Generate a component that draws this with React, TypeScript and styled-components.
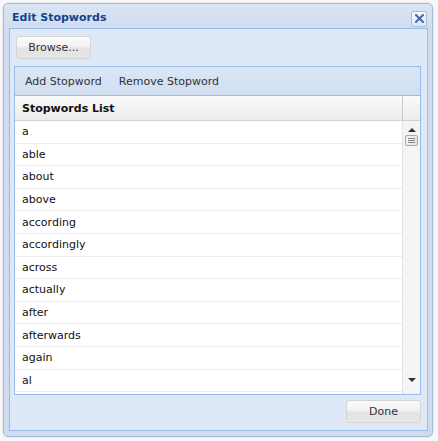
import React from 'react'
import styled, { createGlobalStyle } from 'styled-components'

const GlobalStyle = createGlobalStyle`
	html, body {
		margin: 0;
		padding: 0;
		background: #f7f7f7;
		font-family: "DejaVu Sans", Tahoma, Verdana, sans-serif;
		font-size: 11px;
	}
`

const words = ['a', 'able', 'about', 'above', 'according', 'accordingly', 'across', 'actually', 'after', 'afterwards', 'again', 'al']

const Page = styled.div`
	width: 438px;
	height: 441px;
	padding: 3px 0 0 3px;
	box-sizing: border-box;
`

const Window = styled.div`
	width: 430px;
	height: 434px;
	box-sizing: border-box;
	border: 1px solid #a3bad9;
	border-radius: 5px;
	background: linear-gradient(#d9e5f4, #cfdcef 30px, #cfdcef);
	display: flex;
	flex-direction: column;
	padding: 0 4px 5px 5px;
	box-shadow: 0 0 2px rgba(0, 0, 0, 0.15);
`

const Header = styled.div`
	height: 24px;
	flex-shrink: 0;
	display: flex;
	align-items: center;
	justify-content: space-between;
	padding: 2px 0 0 3px;
	box-sizing: border-box;
`

const Title = styled.span`
	font-weight: bold;
	color: #15428b;
	font-size: 11px;
`

const CloseButton = styled.div`
	width: 16px;
	height: 16px;
	box-sizing: border-box;
	border: 1px solid #a9bfdf;
	border-radius: 2px;
	background: linear-gradient(#f4f8fd, #dbe6f5);
	display: flex;
	align-items: center;
	justify-content: center;
	margin-top: 3px;
	margin-right: 1px;
`

const Body = styled.div`
	flex: 1;
	min-height: 0;
	border: 1px solid #99bbe8;
	background: #dfe8f6;
	display: flex;
	flex-direction: column;
	padding: 7px 6px 7px 4px;
`

const Button = styled.div<{ $width: number }>`
	width: ${p => p.$width}px;
	height: 23px;
	flex-shrink: 0;
	box-sizing: border-box;
	border: 1px solid #d4d4d4;
	border-radius: 3px;
	background: linear-gradient(#fbfbfb, #f2f2f2 45%, #e3e3e3 55%, #e6e6e6);
	display: flex;
	align-items: center;
	justify-content: center;
	color: #333;
	font-size: 11px;
`

const Grid = styled.div`
	margin-top: 7px;
	flex: 1;
	min-height: 0;
	border: 1px solid #99bbe8;
	display: flex;
	flex-direction: column;
	overflow: hidden;
	background: #fff;
`

const Toolbar = styled.div`
	height: 28px;
	flex-shrink: 0;
	background: linear-gradient(#dae7f6, #d0def0);
	border-bottom: 1px solid #99bbe8;
	display: flex;
	align-items: center;
	padding-left: 10px;
	gap: 17px;
	color: #333;
`

const ColumnHeader = styled.div`
	height: 24px;
	flex-shrink: 0;
	display: flex;
	background: linear-gradient(#fafafa, #ececec);
	border-bottom: 1px solid #d0d0d0;
`

const HeaderCell = styled.div`
	flex: 1;
	display: flex;
	align-items: center;
	padding-left: 7px;
	font-weight: bold;
	color: #111;
	border-right: 1px solid #c8c8c8;
`

const HeaderSpacer = styled.div`
	width: 17px;
`

const ListArea = styled.div`
	flex: 1;
	min-height: 0;
	display: flex;
	overflow: hidden;
`

const Rows = styled.div`
	flex: 1;
	overflow: hidden;
`

const Row = styled.div`
	height: 22.6px;
	box-sizing: border-box;
	border-bottom: 1px solid #ededed;
	display: flex;
	align-items: center;
	padding-left: 7px;
	color: #111;
`

const ScrollBar = styled.div`
	width: 17px;
	background: #f4f4f4;
	border-left: 1px solid #e4e4e4;
	display: flex;
	flex-direction: column;
	align-items: center;
	padding: 4px 0 4px;
`

const Thumb = styled.div`
	width: 13px;
	height: 11px;
	margin-top: 3px;
	box-sizing: border-box;
	border: 1px solid #a8a8a8;
	border-radius: 2px;
	background: linear-gradient(90deg, #f4f4f4, #e2e2e2);
	display: flex;
	flex-direction: column;
	justify-content: center;
	align-items: center;
	gap: 1px;
`

const Grip = styled.div`
	width: 7px;
	height: 1px;
	background: #888;
`

const Arrow = styled.div<{ $down?: boolean }>`
	width: 0;
	height: 0;
	margin-top: ${p => (p.$down ? 'auto' : '3px')};
	margin-bottom: ${p => (p.$down ? '8px' : '0')};
	border-left: 4px solid transparent;
	border-right: 4px solid transparent;
	${p => (p.$down ? 'border-top: 4px solid #333;' : 'border-bottom: 4px solid #333;')}
`

const Footer = styled.div`
	display: flex;
	flex-shrink: 0;
	justify-content: flex-end;
	padding-top: 5px;
`

export default function App() {
	return (
		<Page>
			<GlobalStyle />
			<Window>
				<Header>
					<Title>Edit Stopwords</Title>
					<CloseButton>
						<svg width="9" height="9" viewBox="0 0 9 9">
							<path d="M1 1 L8 8 M8 1 L1 8" stroke="#4b6aa3" strokeWidth="2" strokeLinecap="square" />
						</svg>
					</CloseButton>
				</Header>
				<Body>
					<Button $width={75} style={{ marginLeft: 2 }}>Browse...</Button>
					<Grid>
						<Toolbar>
							<span>Add Stopword</span>
							<span>Remove Stopword</span>
						</Toolbar>
						<ColumnHeader>
							<HeaderCell>Stopwords List</HeaderCell>
							<HeaderSpacer />
						</ColumnHeader>
						<ListArea>
							<Rows>
								{words.map(w => (
									<Row key={w}>{w}</Row>
								))}
							</Rows>
							<ScrollBar>
								<Arrow />
								<Thumb>
									<Grip />
									<Grip />
									<Grip />
								</Thumb>
								<Arrow $down />
							</ScrollBar>
						</ListArea>
					</Grid>
					<Footer>
						<Button $width={75}>Done</Button>
					</Footer>
				</Body>
			</Window>
		</Page>
	)
}
